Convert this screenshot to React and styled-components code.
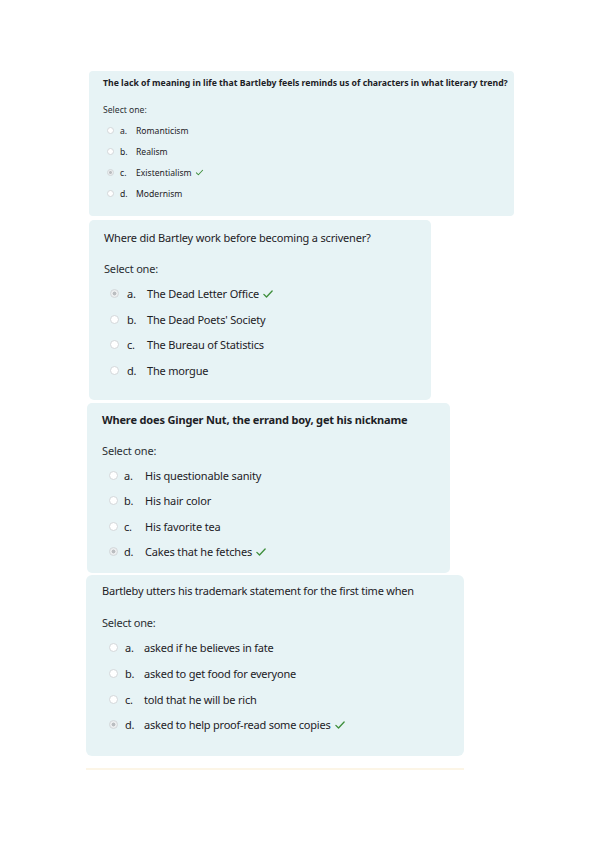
import React from "react";
import styled, { createGlobalStyle } from "styled-components";

const Global = createGlobalStyle`
  html, body { margin: 0; padding: 0; background: #ffffff; }
  body { font-family: "Noto Sans", "Open Sans", Arial, sans-serif; color: #1d2125; }
`;

const Page = styled.div`
  display: flex;
  flex-direction: column;
  padding-top: 71px;
  width: 599px;
  height: 848px;
  box-sizing: border-box;
`;

const Card = styled.section`
  box-sizing: border-box;
  margin-left: ${(p) => p.$left}px;
  width: ${(p) => p.$width}px;
  margin-bottom: ${(p) => p.$gap}px;
  padding: ${(p) => p.$pt}px 10px ${(p) => p.$pb}px ${(p) => p.$pl}px;
  background: #e7f3f5;
  border-radius: ${(p) => p.$radius}px;
  font-size: ${(p) => p.$fs}px;
  line-height: ${(p) => p.$lh}px;
  letter-spacing: ${(p) => p.$ls}px;
`;

const Question = styled.div`
  font-weight: ${(p) => (p.$bold ? 700 : 400)};
  font-size: ${(p) => p.$qfs}px;
  white-space: nowrap;
  margin-bottom: ${(p) => p.$mb}px;
  color: #1d2125;
`;

const Prompt = styled.div`
  margin-bottom: ${(p) => p.$mb}px;
  color: #2b2f33;
`;

const Answers = styled.div`
  display: flex;
  flex-direction: column;
`;

const Row = styled.div`
  display: flex;
  align-items: center;
  height: ${(p) => p.$h}px;
  padding-left: ${(p) => p.$indent}px;
  white-space: nowrap;
`;

const Radio = styled.span`
  box-sizing: border-box;
  width: ${(p) => p.$d}px;
  height: ${(p) => p.$d}px;
  border-radius: 50%;
  border: 1px solid #d3d7da;
  background: ${(p) =>
    p.$checked
      ? "radial-gradient(circle, #babdc0 0 38%, #eceeef 42% 100%)"
      : "#ffffff"};
  flex: none;
`;

const Letter = styled.span`
  margin-left: ${(p) => p.$gap}px;
  width: ${(p) => p.$w}px;
  flex: none;
`;

const AnswerText = styled.span`
  display: inline-flex;
  align-items: center;
  gap: 3px;
`;

const Tick = ({ size }) => (
  <svg width={size} height={size} viewBox="0 0 16 16" aria-hidden="true">
    <path
      d="M2.5 8.5 L6 12 L13.5 4"
      fill="none"
      stroke="#3f8f3c"
      strokeWidth="1.8"
      strokeLinecap="round"
      strokeLinejoin="round"
    />
  </svg>
);

const Divider = styled.div`
  margin-left: 86px;
  width: 378px;
  height: 2px;
  margin-top: 12px;
  background: #fcf5e6;
`;

const questions = [
  {
    text: "The lack of meaning in life  that Bartleby feels reminds us of characters in what literary trend?",
    bold: true,
    card: { left: 89, width: 425, gap: 4, pt: 6, pb: 12, pl: 14, radius: 4, fs: 8.6, lh: 12, ls: 0 },
    qfs: 8.7, qmb: 15, pmb: 4,
    row: { h: 21, indent: 4, d: 7, gap: 6, w: 16, tick: 9 },
    answers: ["Romanticism", "Realism", "Existentialism", "Modernism"],
    correct: 2,
  },
  {
    text: "Where did Bartley work before becoming a scrivener?",
    bold: false,
    card: { left: 89, width: 342, gap: 3, pt: 10, pb: 17, pl: 15, radius: 5, fs: 11, lh: 15, ls: -0.18 },
    qfs: 11, qmb: 16, pmb: 5,
    row: { h: 25.5, indent: 6, d: 9, gap: 8, w: 20, tick: 12 },
    answers: ["The Dead Letter Office", "The Dead Poets' Society", "The Bureau of Statistics", "The morgue"],
    correct: 0,
  },
  {
    text: "Where does Ginger Nut, the errand boy, get his nickname",
    bold: true,
    card: { left: 87, width: 363, gap: 2, pt: 9, pb: 9, pl: 15, radius: 5, fs: 11, lh: 15, ls: -0.16 },
    qfs: 11, qmb: 16, pmb: 5,
    row: { h: 25.3, indent: 7, d: 9, gap: 6, w: 21, tick: 12 },
    answers: ["His questionable sanity", "His hair color", "His favorite tea", "Cakes that he fetches"],
    correct: 3,
  },
  {
    text: "Bartleby utters his trademark statement for the first time when",
    bold: false,
    card: { left: 86, width: 378, gap: 0, pt: 8, pb: 18, pl: 16, radius: 6, fs: 11, lh: 15, ls: -0.22 },
    qfs: 11, qmb: 17, pmb: 5,
    row: { h: 25.6, indent: 7, d: 9, gap: 7, w: 19, tick: 12 },
    answers: ["asked if he believes in fate", "asked to get food for everyone", "told that he will be rich", "asked to help proof-read some copies"],
    correct: 3,
  },
];

const letters = ["a.", "b.", "c.", "d."];

export default function App() {
  return (
    <>
      <Global />
      <Page>
        {questions.map((q, qi) => (
          <Card
            key={qi}
            $left={q.card.left}
            $width={q.card.width}
            $gap={q.card.gap}
            $pt={q.card.pt}
            $pb={q.card.pb}
            $pl={q.card.pl}
            $radius={q.card.radius}
            $fs={q.card.fs}
            $lh={q.card.lh}
            $ls={q.card.ls}
          >
            <Question $bold={q.bold} $qfs={q.qfs} $mb={q.qmb}>
              {q.text}
            </Question>
            <Prompt $mb={q.pmb}>Select one:</Prompt>
            <Answers>
              {q.answers.map((a, ai) => (
                <Row key={ai} $h={q.row.h} $indent={q.row.indent}>
                  <Radio $d={q.row.d} $checked={ai === q.correct} />
                  <Letter $gap={q.row.gap} $w={q.row.w}>
                    {letters[ai]}
                  </Letter>
                  <AnswerText>
                    {a}
                    {ai === q.correct && <Tick size={q.row.tick} />}
                  </AnswerText>
                </Row>
              ))}
            </Answers>
          </Card>
        ))}
        <Divider />
      </Page>
    </>
  );
}
